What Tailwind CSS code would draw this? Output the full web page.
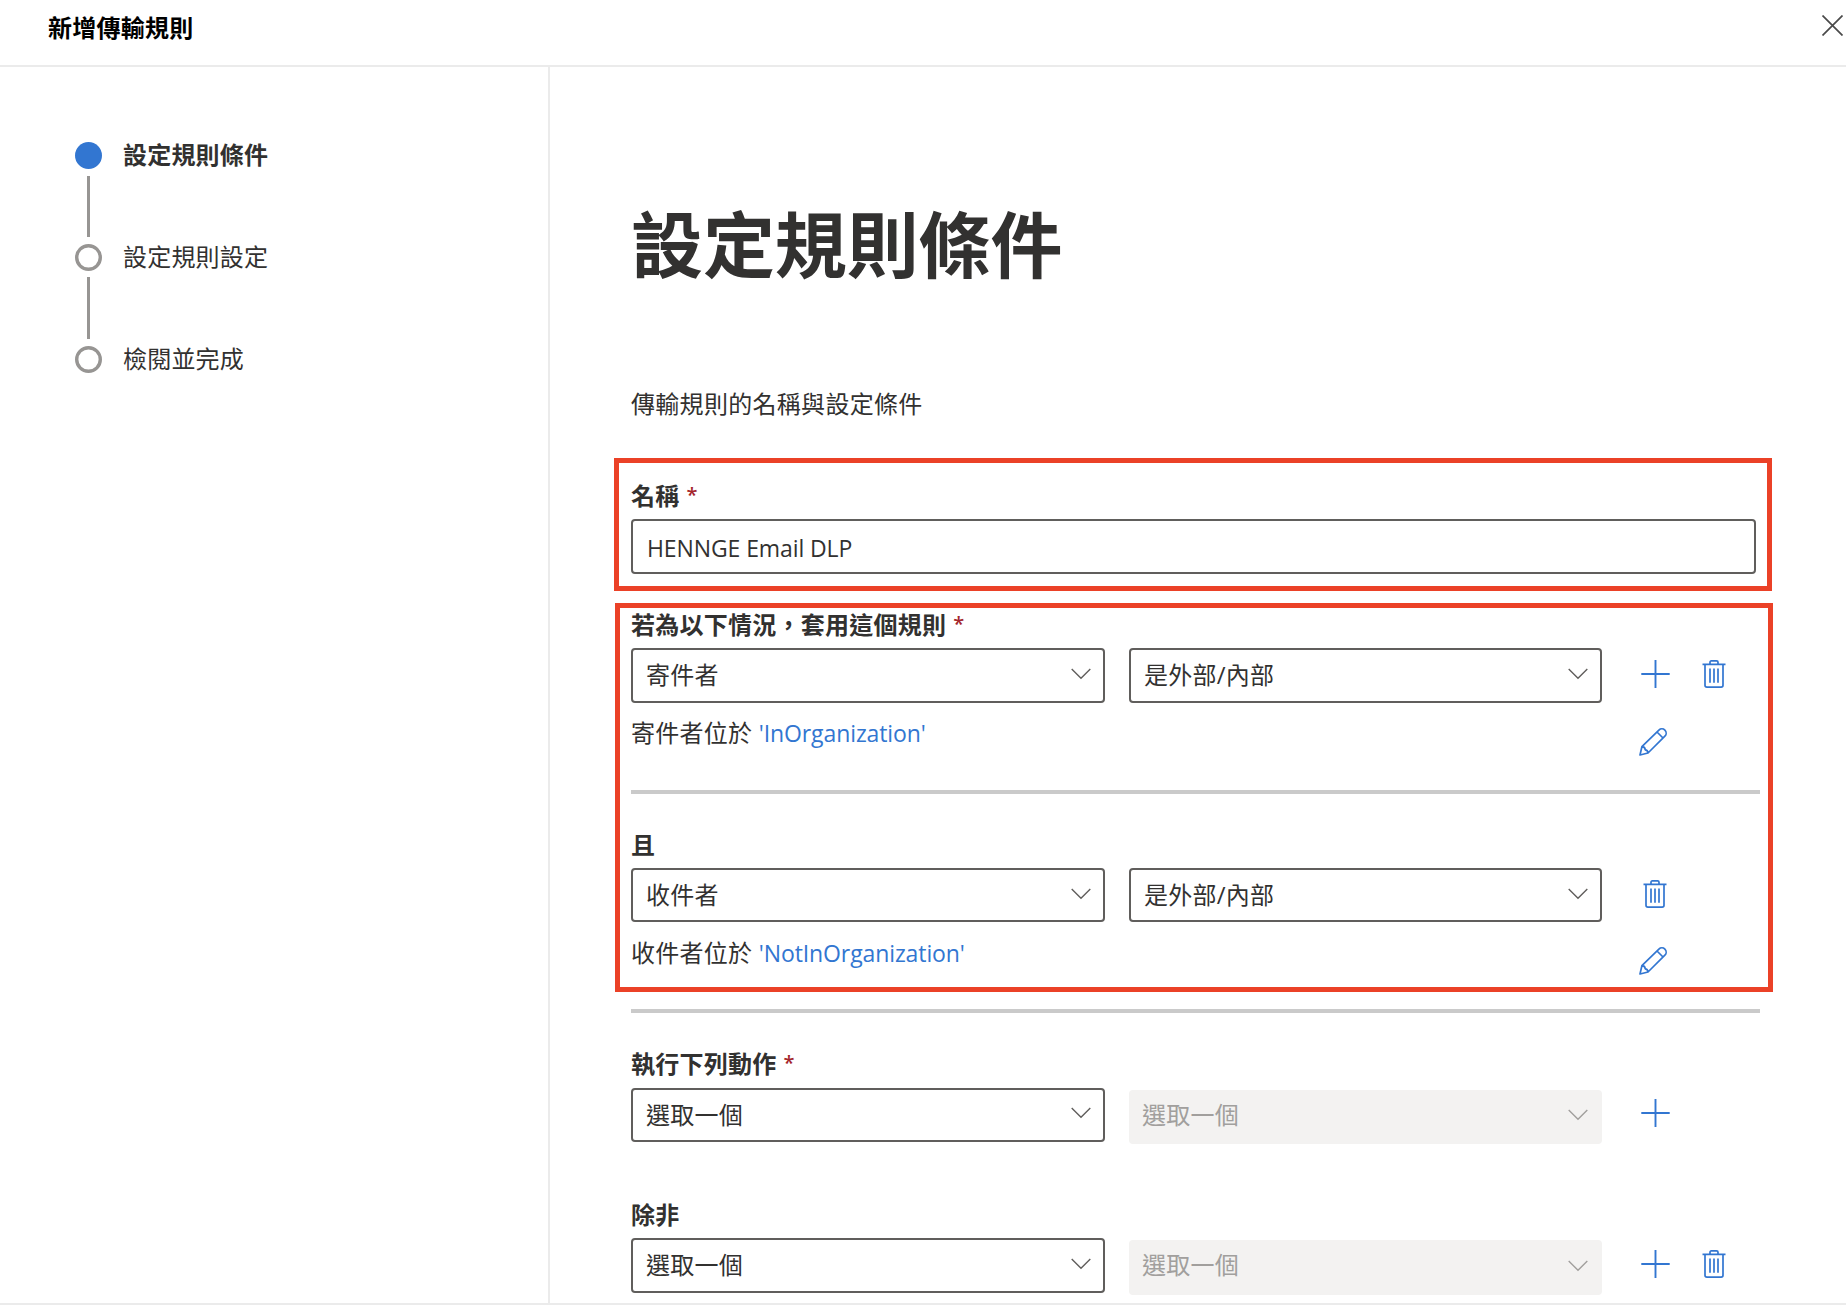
<!DOCTYPE html>
<html lang="zh-Hant">
<head>
<meta charset="utf-8">
<title>新增傳輸規則</title>
<script src="https://cdn.jsdelivr.net/npm/@tailwindcss/browser@4"></script>
</head>
<body class="bg-white">
<svg class="hidden">
  <symbol id="chevron" viewBox="0 0 20 12"><path d="M.7 1l9.3 9.3L19.300 1" fill="none" stroke="currentColor" stroke-width="1.400"/></symbol>
  <symbol id="plus" viewBox="0 0 29 28"><path d="M14.500 0v28M.300 14h28.400" fill="none" stroke="currentColor" stroke-width="1.900"/></symbol>
  <symbol id="trash" viewBox="0 0 24 28"><g fill="none" stroke="currentColor" stroke-width="1.700"><path d="M.5 4.300h23M8 4V2.300Q8 .9 9.400.9h5.200Q16 .9 16 2.300V4M3 4.500v20.700q0 1.900 1.900 1.900h14.200q1.900 0 1.900-1.900V4.500M8 8.500v14.200M12 8.500v14.200M16 8.500v14.200"/></g></symbol>
  <symbol id="pencil" viewBox="0 0 28 28"><path d="M1 27l1.900-8.300L19.900 2.200a4.200 4.200 0 0 1 6 6L9 25zM18 4l6 6M2.900 18.700q3.200.2 3.300 3.100Q9 22 9 25" fill="none" stroke="currentColor" stroke-width="1.700" stroke-linejoin="round"/></symbol>
  <symbol id="step" viewBox="0 0 27 27"><circle cx="13.500" cy="13.500" r="11.800" fill="none" stroke="currentColor" stroke-width="3.400"/></symbol>
</svg>
<div class="relative flex h-[1312px] w-[1846px] flex-col overflow-hidden bg-white font-['Open_Sans','Noto_Sans_CJK_TC',sans-serif] text-[24px] leading-[36px] tracking-[0.25px] text-[#323130]">
  <header class="flex h-[67px] shrink-0 items-center justify-between border-b-2 border-[#ebebeb] pb-[10px] pl-[48px]">
    <h2 class="font-bold text-black">新增傳輸規則</h2>
    <svg class="mt-[-4px] mr-[3px] size-[21px] text-[#4a4a4a]" viewBox="0 0 21 21"><path d="M.5.5l20 20M20.500.5l-20 20" fill="none" stroke="currentColor" stroke-width="1.700"/></svg>
  </header>

  <div class="flex min-h-0 flex-1">
    <nav class="w-[550px] shrink-0 border-r-2 border-[#ebebeb] pt-[75px] pl-[75px]">
      <ol class="flex flex-col tracking-[0.2px]">
        <li class="flex h-[102px] gap-[21px]">
          <div class="flex w-[27px] flex-col items-center"><span class="size-[27px] rounded-full bg-[#3276d1]"></span><span class="mt-[7px] h-[61px] w-[3px] bg-[#979593]"></span></div>
          <span class="mt-[-5px] font-bold">設定規則條件</span>
        </li>
        <li class="flex h-[102px] gap-[21px]">
          <div class="flex w-[27px] flex-col items-center"><svg class="size-[27px] text-[#979593]"><use href="#step"/></svg><span class="mt-[6px] h-[62px] w-[3px] bg-[#979593]"></span></div>
          <span class="mt-[-5px]">設定規則設定</span>
        </li>
        <li class="flex h-[27px] gap-[21px]">
          <svg class="size-[27px] text-[#979593]"><use href="#step"/></svg>
          <span class="mt-[-5px]">檢閱並完成</span>
        </li>
      </ol>
    </nav>

    <main class="flex w-[1210px] shrink-0 flex-col pt-[127px] pl-[81px]">
      <h1 class="flex h-[100px] items-center text-[72px] leading-[100px] font-bold tracking-[-0.100px]">設定規則條件</h1>
      <p class="mt-[95px] flex h-[30px] items-center tracking-[0.3px]">傳輸規則的名稱與設定條件</p>

      <label class="mt-[57px] flex h-[40px] items-center gap-[7px] font-bold">名稱<span class="mt-[-3px] text-[20px] font-semibold text-[#a4262c]">*</span></label>
      <div class="mt-[3px] flex h-[55px] w-[1125px] items-center rounded-[4px] border-2 border-[#605e5c] px-[14px] pt-[2px] text-[23px] tracking-[-0.100px]">HENNGE Email DLP</div>

      <label class="mt-[31px] flex h-[40px] items-center gap-[7px] font-bold">若為以下情況，套用這個規則<span class="mt-[-3px] text-[20px] font-semibold text-[#a4262c]">*</span></label>
      <div class="mt-[3px] flex h-[55px]">
        <div class="flex w-[474px] items-center justify-between rounded-[4px] border-2 border-[#605e5c] pr-[12px] pl-[13px]"><span class="mt-[-2px]">寄件者</span><svg class="mt-[-3px] h-[12px] w-[20px] text-[#605e5c]"><use href="#chevron"/></svg></div>
        <div class="ml-[24px] flex w-[473px] items-center justify-between rounded-[4px] border-2 border-[#605e5c] pr-[12px] pl-[13px]"><span class="mt-[-2px]">是外部/內部</span><svg class="mt-[-3px] h-[12px] w-[20px] text-[#605e5c]"><use href="#chevron"/></svg></div>
        <svg class="mt-[12px] ml-[39px] h-[28px] w-[29px] text-[#3276d1]"><use href="#plus"/></svg>
        <svg class="mt-[12px] ml-[32px] h-[28px] w-[24px] text-[#3276d1]"><use href="#trash"/></svg>
      </div>
      <div class="flex h-[60px] items-center justify-between pr-[93px]">
        <p>寄件者位於 <span class="text-[23px] tracking-[-0.100px] text-[#3276d1]">'InOrganization'</span></p>
        <svg class="mt-[18px] size-[28px] text-[#3276d1]"><use href="#pencil"/></svg>
      </div>
      <hr class="mt-[27px] h-[4px] border-0 bg-[#cacaca]">

      <label class="mt-[31px] flex h-[40px] items-center font-bold">且</label>
      <div class="mt-[3px] flex h-[54px]">
        <div class="flex w-[474px] items-center justify-between rounded-[4px] border-2 border-[#605e5c] pr-[12px] pl-[13px]">收件者<svg class="mt-[-2px] h-[12px] w-[20px] text-[#605e5c]"><use href="#chevron"/></svg></div>
        <div class="ml-[24px] flex w-[473px] items-center justify-between rounded-[4px] border-2 border-[#605e5c] pr-[12px] pl-[13px]">是外部/內部<svg class="mt-[-2px] h-[12px] w-[20px] text-[#605e5c]"><use href="#chevron"/></svg></div>
        <svg class="mt-[12px] ml-[41px] h-[28px] w-[24px] text-[#3276d1]"><use href="#trash"/></svg>
      </div>
      <div class="mt-[2px] flex h-[60px] items-center justify-between pr-[93px]">
        <p class="mt-[-2px]">收件者位於 <span class="text-[23px] tracking-[-0.100px] text-[#3276d1]">'NotInOrganization'</span></p>
        <svg class="mt-[14px] size-[28px] text-[#3276d1]"><use href="#pencil"/></svg>
      </div>
      <hr class="mt-[25px] h-[4px] border-0 bg-[#cacaca]">

      <label class="mt-[31px] flex h-[40px] items-center gap-[7px] font-bold">執行下列動作<span class="mt-[-3px] text-[20px] font-semibold text-[#a4262c]">*</span></label>
      <div class="mt-[4px] flex h-[54px]">
        <div class="flex w-[474px] items-center justify-between rounded-[4px] border-2 border-[#605e5c] pr-[12px] pl-[13px]">選取一個<svg class="mt-[-4px] h-[12px] w-[20px] text-[#605e5c]"><use href="#chevron"/></svg></div>
        <div class="mt-[2px] ml-[24px] flex h-[54px] w-[473px] items-center justify-between rounded-[4px] bg-[#f3f2f1] pr-[14px] pl-[13px] text-[#a19f9d]"><span class="mt-[-4px]">選取一個</span><svg class="mt-[-4px] h-[12px] w-[20px]"><use href="#chevron"/></svg></div>
        <svg class="mt-[11px] ml-[39px] h-[28px] w-[29px] text-[#3276d1]"><use href="#plus"/></svg>
      </div>

      <label class="mt-[53px] flex h-[40px] items-center font-bold">除非</label>
      <div class="mt-[3px] flex h-[55px]">
        <div class="flex w-[474px] items-center justify-between rounded-[4px] border-2 border-[#605e5c] pr-[12px] pl-[13px]"><span class="mt-[-2px]">選取一個</span><svg class="mt-[-3px] h-[12px] w-[20px] text-[#605e5c]"><use href="#chevron"/></svg></div>
        <div class="mt-[2px] ml-[24px] flex h-[55px] w-[473px] items-center justify-between rounded-[4px] bg-[#f3f2f1] pr-[14px] pl-[13px] text-[#a19f9d]"><span class="mt-[-5px]">選取一個</span><svg class="mt-[-3px] h-[12px] w-[20px]"><use href="#chevron"/></svg></div>
        <svg class="mt-[12px] ml-[39px] h-[28px] w-[29px] text-[#3276d1]"><use href="#plus"/></svg>
        <svg class="mt-[12px] ml-[32px] h-[28px] w-[24px] text-[#3276d1]"><use href="#trash"/></svg>
      </div>
    </main>
  </div>
  <footer class="h-[9px] shrink-0 border-t-2 border-[#ebebeb]"></footer>

  <!-- Highlight frames laid over the form -->
  <div class="absolute top-[458px] left-[614px] h-[133px] w-[1158px] border-5 border-[#eb4127]"></div>
  <div class="absolute top-[603px] left-[615px] h-[389px] w-[1158px] border-5 border-[#eb4127]"></div>
</div>
</body>
</html>
